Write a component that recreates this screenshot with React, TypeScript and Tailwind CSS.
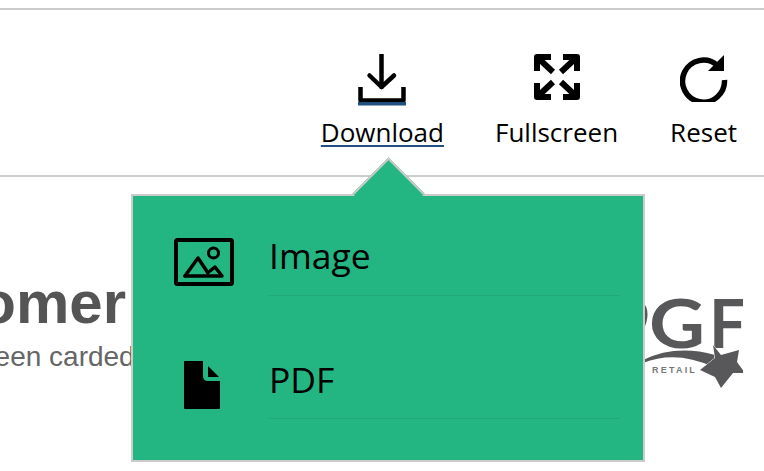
import { ReactNode } from 'react'

function DownloadIcon() {
  return (
    <svg width="48" height="52" viewBox="0 0 48 52" fill="none" stroke="black" strokeWidth="4.5">
      <path d="M23.5 0V33" strokeLinecap="round" />
      <path d="M11.5 21.5L23.5 33L36 21.5" strokeLinecap="round" strokeLinejoin="round" />
      <path d="M2.5 33V46.5H45.5V33" strokeLinejoin="round" />
      <path d="M0 49.8H48" stroke="#1f5080" strokeWidth="3.5" />
    </svg>
  )
}

function FullscreenIcon() {
  return (
    <svg width="46" height="46" viewBox="0 0 46 46" fill="none" stroke="black" strokeWidth="6" strokeLinejoin="round">
      <path d="M3 17V3H17M3 3L19 18" />
      <path d="M29 3H43V17M43 3L27 18" />
      <path d="M3 29V43H17M3 43L19 28" />
      <path d="M29 43H43V29M43 43L27 28" />
    </svg>
  )
}

function ResetIcon() {
  return (
    <svg width="48" height="48" viewBox="0 0 48 48" fill="none">
      <path d="M37 11A21 21 0 1 0 44.5 26" stroke="black" strokeWidth="5.5" />
      <path d="M44 1V17H28Z" fill="black" />
    </svg>
  )
}

function ImageIcon() {
  return (
    <svg width="60" height="48" viewBox="0 0 60 48" fill="none" stroke="black" className="shrink-0">
      <rect x="2" y="2" width="56" height="44" rx="1.5" strokeWidth="4" />
      <circle cx="39.5" cy="15" r="5" strokeWidth="3" />
      <path d="M11 38L24 20L34 35" strokeWidth="3.5" strokeLinejoin="round" strokeLinecap="round" />
      <path d="M11 38H48L41 29L36 33" strokeWidth="3.5" strokeLinejoin="round" strokeLinecap="round" />
    </svg>
  )
}

function PdfIcon() {
  return (
    <svg width="36" height="48" viewBox="0 0 36 48" fill="black" className="shrink-0">
      <path d="M1 0H19V15Q19 20 24 20H36V47Q36 48 35 48H1Q0 48 0 47V1Q0 0 1 0Z" />
      <path d="M24 5L35 16H24Z" />
    </svg>
  )
}

function Logo() {
  return (
    <svg width="102" height="96" viewBox="0 0 102 96" className="shrink-0">
      {/* end of the letter hidden behind the menu */}
      <path d="M0 8Q8 18 0 34" fill="none" stroke="#58585a" strokeWidth="5" />
      <text transform="translate(8 53) scale(1.17 1)" fill="#58585a" fontSize="66" fontWeight="700" fontFamily="Lato, sans-serif">G</text>
      <text x="68" y="53" fill="#58585a" fontSize="66" fontWeight="700" fontFamily="Lato, sans-serif">F</text>
      <path d="M2 65Q35 49 74 60L72 72Q35 55 2 68Z" fill="#58585a" stroke="white" strokeWidth="1" paintOrder="stroke" />
      <path d="M72 50L80 60L98 55L96 67L104 78L92 78L80 93L74 82L59 75L74 63Z" fill="#58585a" stroke="white" strokeWidth="1" paintOrder="stroke" />
      <text x="11" y="78" fill="#77777a" fontSize="9" fontWeight="700" letterSpacing="2.2" fontFamily="'Liberation Sans', sans-serif">RETAIL</text>
    </svg>
  )
}

function ToolButton({ icon, label, underline }: { icon: ReactNode; label: string; underline?: boolean }) {
  return (
    <button className={`flex flex-col items-center ${underline ? '-mr-px' : ''}`}>
      <div className="flex h-[52px] items-start">{icon}</div>
      <span className={`mt-[10px] text-[26px] leading-[33px] text-black ${underline ? 'underline decoration-[#1f5080] decoration-2 underline-offset-[3px]' : ''}`}>
        {label}
      </span>
    </button>
  )
}

export default function App() {
  return (
    <div className="relative h-[471px] w-[764px] overflow-hidden bg-white pt-2 font-['Open_Sans',sans-serif]">
      {/* Toolbar */}
      <div className="flex h-[169px] items-start justify-end gap-[52px] border-y-2 border-[#cccccc] pr-[27px] pt-[44px]">
        <ToolButton icon={<DownloadIcon />} label="Download" underline />
        <ToolButton icon={<FullscreenIcon />} label="Fullscreen" />
        <ToolButton icon={<ResetIcon />} label="Reset" />
      </div>

      {/* Page behind the menu */}
      <div className="flex items-start justify-between pr-[21px] pt-[98px]">
        <div className="-ml-[154px] whitespace-nowrap font-['Liberation_Sans',sans-serif]">
          <h1 className="text-[60px] font-bold leading-[56px] text-[#555555]">Customer</h1>
          <p className="ml-[133px] mt-[10px] text-[28px] leading-[32px] text-[#666666]">been carded at the door</p>
        </div>
        <div className="pt-[20px]"><Logo /></div>
      </div>

      {/* Download menu */}
      <div className="absolute left-[131px] top-[194px] h-[268px] w-[514px] border-2 border-[#cccccc] bg-[#23b682]">
        <div className="absolute left-[230px] top-[-28px] h-[51px] w-[51px] rotate-45 border-l-2 border-t-2 border-[#cccccc] bg-[#23b682]" />
        <div className="relative flex flex-col pl-[41px] pr-[23px]">
          <div className="flex h-[100px] items-end">
            <div className="mb-[10px] flex w-[95px]"><ImageIcon /></div>
            <div className="flex-1 border-b border-[#20a877] pb-[15px] text-[35.5px] leading-[49px] text-black">Image</div>
          </div>
          <div className="flex h-[123px] items-end">
            <div className="mb-[10px] flex w-[95px] pl-[10px]"><PdfIcon /></div>
            <div className="flex-1 border-b border-[#20a877] pb-[14px] text-[35.5px] leading-[49px] text-black">PDF</div>
          </div>
        </div>
      </div>
    </div>
  )
}
